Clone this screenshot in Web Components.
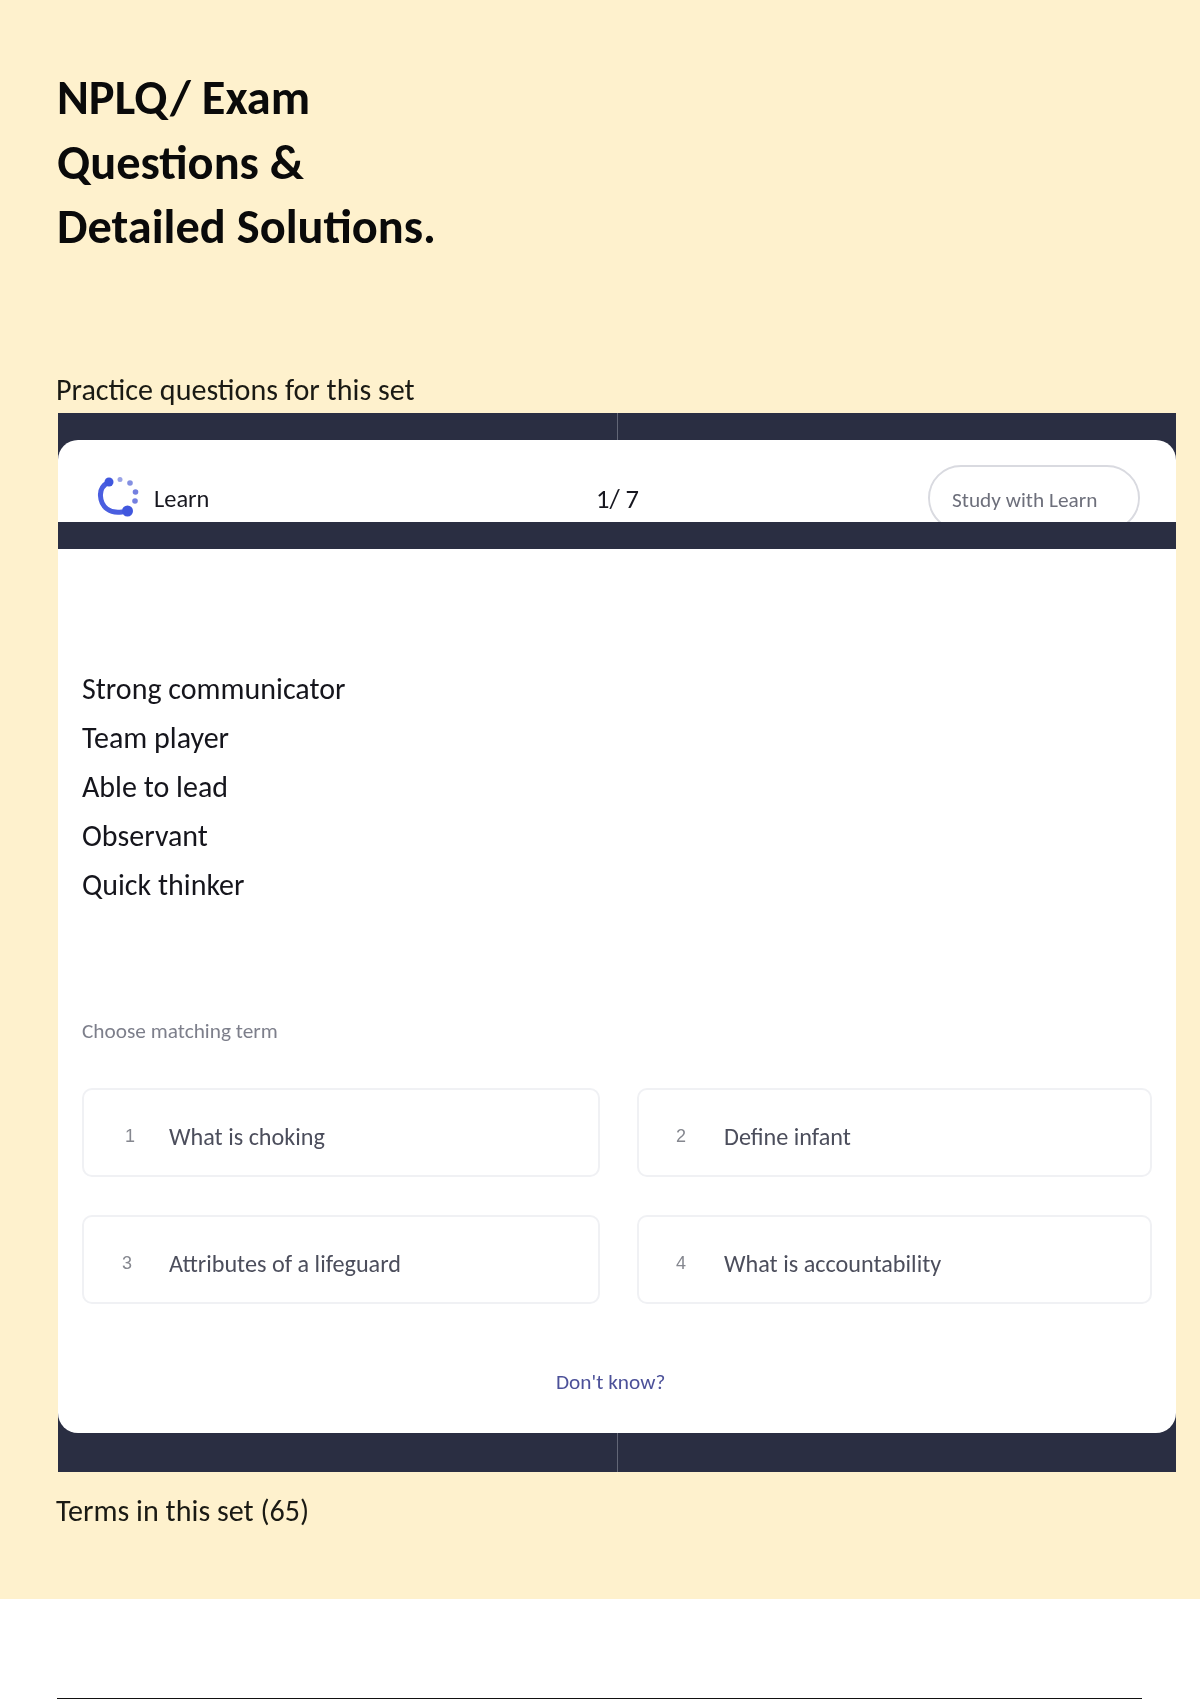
<!DOCTYPE html>
<html lang="en">
<head>
<meta charset="utf-8">
<title>NPLQ/ Exam Questions &amp; Detailed Solutions.</title>
<style>
  html, body { margin: 0; padding: 0; background: #fff; }
  body { font-family: Carlito, Lato, "Liberation Sans", sans-serif; color: #111; }
</style>
</head>
<body>
<set-page>
  <span slot="title">NPLQ/ Exam<br>Questions &amp;<br>Detailed Solutions.</span>
  <span slot="practice">Practice questions for this set</span>
  <learn-card>
    <learn-header slot="header" count="1/ 7" action="Study with Learn"></learn-header>
    <div slot="prompt">Strong communicator</div>
    <div slot="prompt">Team player</div>
    <div slot="prompt">Able to lead</div>
    <div slot="prompt">Observant</div>
    <div slot="prompt">Quick thinker</div>
    <answer-option slot="option" num="1" style="--num-x:41px">What is choking</answer-option>
    <answer-option slot="option" num="2" style="--num-x:37px">Define infant</answer-option>
    <answer-option slot="option" num="3" style="--num-x:38px">Attributes of a lifeguard</answer-option>
    <answer-option slot="option" num="4" style="--num-x:37px">What is accountability</answer-option>
  </learn-card>
  <span slot="terms">Terms in this set (65)</span>
</set-page>

<script>
// Cream section with the title and the labels, then the rule at the foot of the page
class SetPage extends HTMLElement {
  constructor() {
    super();
    this.attachShadow({ mode: 'open' });
    this.shadowRoot.innerHTML = `
      <style>
        :host { display: block; filter: blur(0.35px); }
        .hero {
          box-sizing: border-box;
          height: 1599px;
          padding: 66px 24px 0 57px;
          background: #fef1cd;
        }
        h1 {
          margin: 0;
          height: 300px;
          font-size: 48.400px;
          line-height: 64.5px;
          font-weight: 700;
          color: #0a0a0a;
        }
        .label {
          height: 47px;
          margin-left: -1px;
          font-size: 30.100px;
          line-height: 48px;
          color: #1a1a14;
        }
        .terms { margin-top: 15px; }
        .rule {
          height: 1px;
          margin: 99px 58px 0 57px;
          background: #111;
        }
      </style>
      <div class="hero">
        <h1><slot name="title"></slot></h1>
        <div class="label"><slot name="practice"></slot></div>
        <slot></slot>
        <div class="label terms"><slot name="terms"></slot></div>
      </div>
      <div class="rule"></div>
    `;
  }
}

// Dark frame around the white quiz card
class LearnCard extends HTMLElement {
  constructor() {
    super();
    this.attachShadow({ mode: 'open' });
    this.shadowRoot.innerHTML = `
      <style>
        :host {
          display: block;
          margin-left: 1px;
          background: #2a2e42;
        }
        .strip { height: 27px; display: flex; justify-content: center; }
        .strip.bottom { height: 39px; }
        .strip i { width: 1px; background: #626676; }
        .head {
          height: 82px;
          overflow: hidden;
          background: #fff;
          border-radius: 20px 20px 0 0;
        }
        .band { height: 27px; }
        .body {
          box-sizing: border-box;
          height: 884px;
          padding: 115px 24px 0 24px;
          background: #fff;
          border-radius: 0 0 20px 20px;
        }
        .prompts {
          height: 355px;
          font-size: 30px;
          line-height: 49px;
          color: #15151c;
        }
        .hint {
          height: 24px;
          font-size: 21.300px;
          line-height: 24px;
          color: #7d7f8b;
        }
        .grid {
          display: grid;
          grid-template-columns: 518px 515px;
          grid-auto-rows: 89px;
          justify-content: space-between;
          gap: 38px 37px;
          margin-top: 45px;
          width: 1070px;
        }
        .skip {
          margin: 65px 0 0 -24px;
          padding-left: 498px;
          font-size: 21.300px;
          line-height: 26px;
          color: #4c5199;
        }
      </style>
      <div class="strip"><i></i></div>
      <div class="head"><slot name="header"></slot></div>
      <div class="band"></div>
      <div class="body">
        <div class="prompts"><slot name="prompt"></slot></div>
        <div class="hint">Choose matching term</div>
        <div class="grid"><slot name="option"></slot></div>
        <div class="skip">Don't know?</div>
      </div>
      <div class="strip bottom"><i></i></div>
    `;
  }
}

// Logo, counter and the pill that the dark band cuts off
class LearnHeader extends HTMLElement {
  constructor() {
    super();
    this.attachShadow({ mode: 'open' });
    const count = this.getAttribute('count');
    const action = this.getAttribute('action');
    this.shadowRoot.innerHTML = `
      <style>
        :host {
          display: grid;
          grid-template-columns: 1fr auto 1fr;
          height: 82px;
          padding: 0 36px 0 39px;
          box-sizing: border-box;
          font-size: 24.400px;
          color: #17171f;
        }
        .brand { display: flex; align-items: center; gap: 15px; padding-top: 34px; height: 48px; }
        .brand span { padding-top: 2px; }
        svg { display: block; flex: none; overflow: visible; }
        .count { padding-top: 45px; line-height: 28px; font-size: 26.500px; transform: translateX(-1px); }
        .pill {
          justify-self: end;
          box-sizing: border-box;
          width: 212px;
          height: 66px;
          margin-top: 25px;
          padding: 20px 0 0 22px;
          border: 2px solid #d9dae0;
          border-radius: 33px;
          font-size: 21.300px;
          line-height: 26px;
          color: #6d6f7b;
        }
      </style>
      <div class="brand">
        <svg width="42" height="42" viewBox="0 0 42 42" fill="none">
          <path d="M12 5 C6 8 3 13 3.500 19 C4 30 13 37 25 35" stroke="#4a5ee0" stroke-width="5" stroke-linecap="round"/>
          <circle cx="12" cy="5" r="4.500" fill="#4057de"/>
          <circle cx="30.500" cy="34" r="5.500" fill="#4057de"/>
          <circle cx="23" cy="2.500" r="2.500" fill="#9aa3e6"/>
          <circle cx="33" cy="6" r="2.800" fill="#8490e2"/>
          <circle cx="38.500" cy="15" r="2.800" fill="#7480e0"/>
          <circle cx="38" cy="24" r="2.800" fill="#7480e0"/>
        </svg>
        <span>Learn</span>
      </div>
      <div class="count">${count}</div>
      <div class="pill">${action}</div>
    `;
  }
}

// One numbered answer box
class AnswerOption extends HTMLElement {
  constructor() {
    super();
    this.attachShadow({ mode: 'open' });
    this.shadowRoot.innerHTML = `
      <style>
        :host {
          display: flex;
          align-items: center;
          box-sizing: border-box;
          height: 89px;
          padding-top: 7px;
          border: 2px solid #f0f1f4;
          border-radius: 10px;
          font-size: 24.200px;
          color: #4c4e5c;
          background: #fff;
        }
        .num {
          flex: none;
          width: 85px;
          padding-left: var(--num-x);
          box-sizing: border-box;
          font-size: 18px;
          color: #85878f;
          font-family: "Liberation Sans", sans-serif;
        }
      </style>
      <span class="num">${this.getAttribute('num')}</span>
      <slot></slot>
    `;
  }
}

customElements.define('set-page', SetPage);
customElements.define('learn-card', LearnCard);
customElements.define('learn-header', LearnHeader);
customElements.define('answer-option', AnswerOption);
</script>
</body>
</html>
